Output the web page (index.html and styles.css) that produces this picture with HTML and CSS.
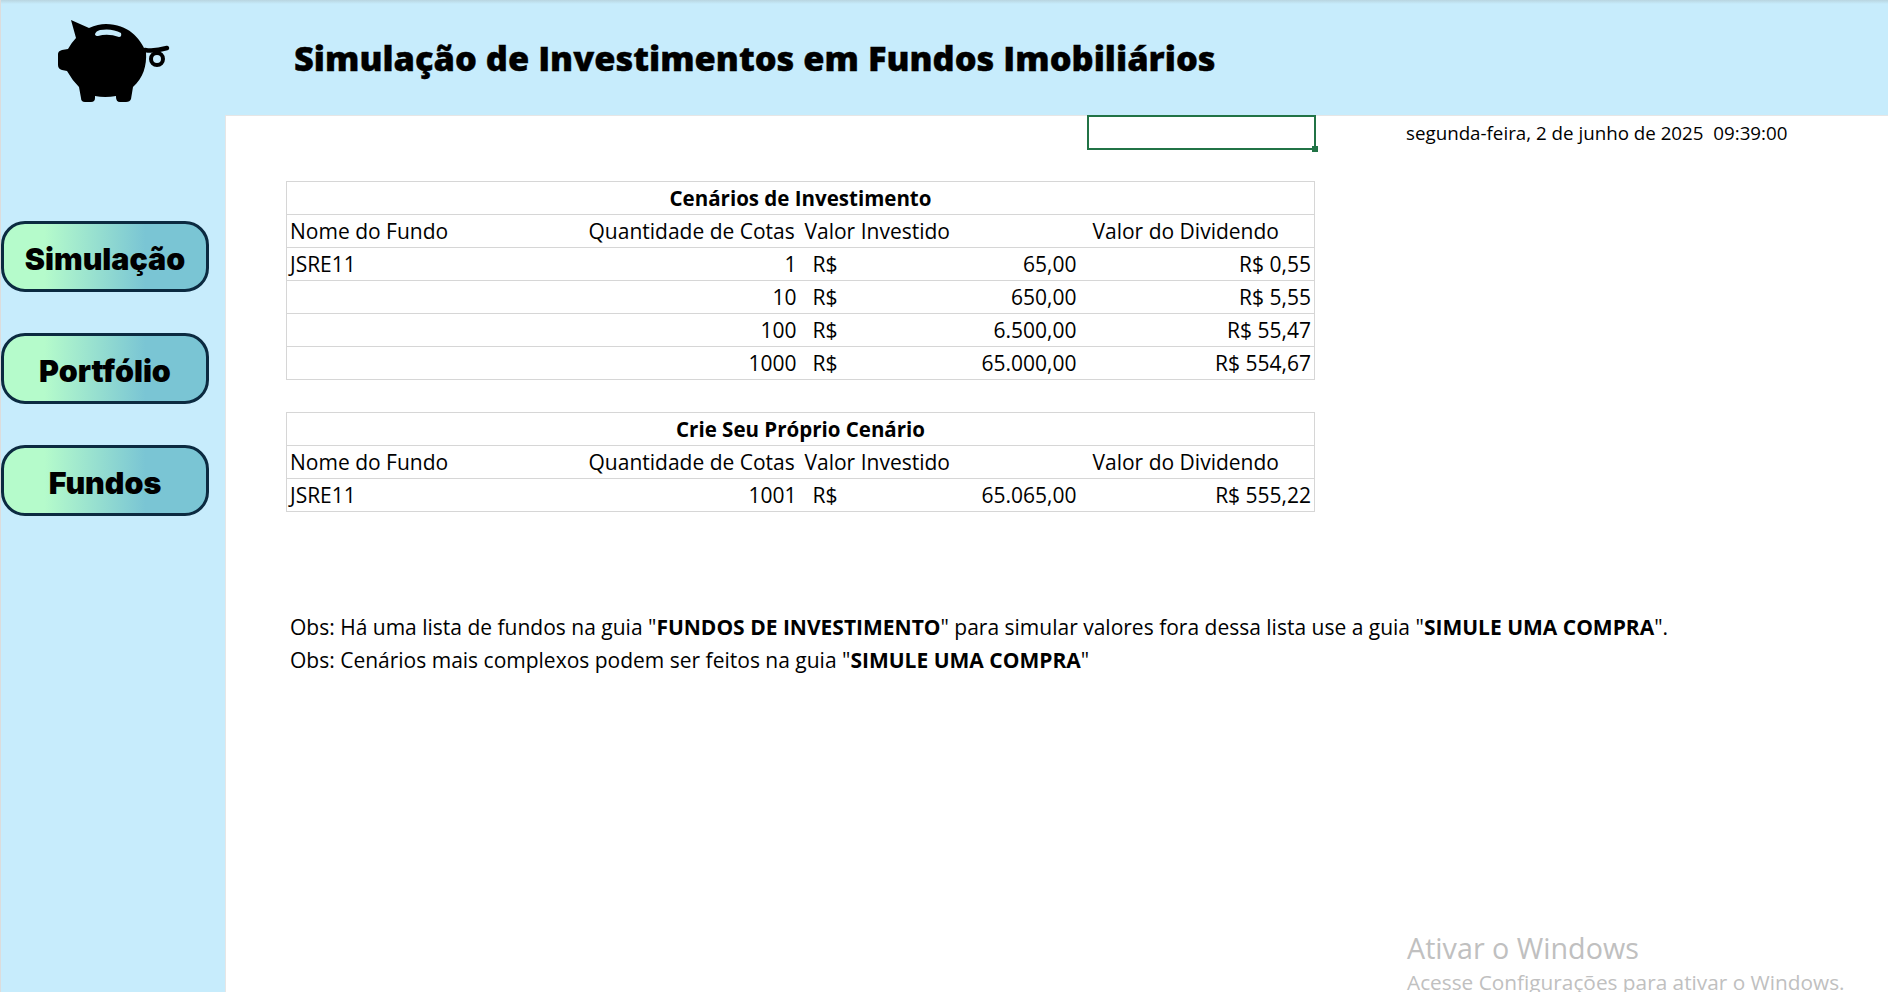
FILE: index.html
```html
<!DOCTYPE html>
<html lang="pt-BR">

<head>
    <meta charset="UTF-8">
    <title>Simulação de Investimentos em Fundos Imobiliários</title>
    <link rel="stylesheet" href="styles.css">
</head>

<body>
    <div class="app">
        <header class="topbar">
            <div class="logo">
                <svg width="225" height="115" viewBox="0 0 225 115">
                    <path d="M71 20 L89 28 Q98 24 106 24 C128 24 140 38 146 52 C147 66 143 78 133 87 L131 99 Q130 102 126 102 L120 102 Q116 102 116 97 L116 96 Q105 98 95 96 L95 98 Q95 102 91 102 L85 102 Q81 102 81 98 L79 87 Q72 80 67 71 L62 70 Q58 69 58 65 L58 54 Q58 51 62 50 L68 49 Q72 42 76 38 Z" fill="#000" />
                    <path d="M95 34 Q96 31 100 30 Q112 28 121 33 Q122 37 119 37 Q108 33 98 36 Q95 36 95 34 Z" fill="#c7ecfc" />
                    <path d="M145 50 C150 51 160 50 167 48" fill="none" stroke="#000" stroke-width="4.5" stroke-linecap="round" />
                    <ellipse cx="157" cy="59" rx="6" ry="6" fill="none" stroke="#000" stroke-width="4" />
                </svg>
            </div>
            <h1 class="title">Simulação de Investimentos em Fundos Imobiliários</h1>
        </header>

        <nav class="sidebar">
            <button type="button" class="nav-btn">Simulação</button>
            <button type="button" class="nav-btn">Portfólio</button>
            <button type="button" class="nav-btn">Fundos</button>
        </nav>

        <main class="sheet">
            <div class="date-row">
                <div class="selected-cell"></div>
                <div class="date">segunda-feira, 2 de junho de 2025&nbsp; 09:39:00</div>
            </div>

            <table class="grid first">
                <colgroup>
                    <col class="col-name"><col class="col-qty"><col class="col-sym"><col class="col-val"><col class="col-div">
                </colgroup>
                <tr><th colspan="5">Cenários de Investimento</th></tr>
                <tr>
                    <td>Nome do Fundo</td>
                    <td>Quantidade de Cotas</td>
                    <td colspan="2">Valor Investido</td>
                    <td class="head-div">Valor do Dividendo</td>
                </tr>
                <tr><td>JSRE11</td><td class="num">1</td><td class="sym">R$</td><td class="num">65,00</td><td class="num">R$ 0,55</td></tr>
                <tr><td></td><td class="num">10</td><td class="sym">R$</td><td class="num">650,00</td><td class="num">R$ 5,55</td></tr>
                <tr><td></td><td class="num">100</td><td class="sym">R$</td><td class="num">6.500,00</td><td class="num">R$ 55,47</td></tr>
                <tr><td></td><td class="num">1000</td><td class="sym">R$</td><td class="num">65.000,00</td><td class="num">R$ 554,67</td></tr>
            </table>

            <table class="grid second">
                <colgroup>
                    <col class="col-name"><col class="col-qty"><col class="col-sym"><col class="col-val"><col class="col-div">
                </colgroup>
                <tr><th colspan="5">Crie Seu Próprio Cenário</th></tr>
                <tr>
                    <td>Nome do Fundo</td>
                    <td>Quantidade de Cotas</td>
                    <td colspan="2">Valor Investido</td>
                    <td class="head-div">Valor do Dividendo</td>
                </tr>
                <tr><td>JSRE11</td><td class="num">1001</td><td class="sym">R$</td><td class="num">65.065,00</td><td class="num">R$ 555,22</td></tr>
            </table>

            <div class="notes">
                <p>Obs: Há uma lista de fundos na guia "<b>FUNDOS DE INVESTIMENTO</b>" para simular valores fora dessa lista use a guia "<b>SIMULE UMA COMPRA</b>".</p>
                <p>Obs: Cenários mais complexos podem ser feitos na guia "<b>SIMULE UMA COMPRA</b>"</p>
            </div>
        </main>
    </div>

    <div class="watermark">
        <div class="wm-title">Ativar o Windows</div>
        <div class="wm-sub">Acesse Configurações para ativar o Windows.</div>
    </div>
</body>

</html>
```

FILE: styles.css
```css
html,
body {
    margin: 0;
    height: 992px;
    overflow: hidden;
    background-color: white;
    font-family: "Open Sans", "Noto Sans", sans-serif;
    color: black;
}

.app {
    display: grid;
    grid-template-columns: 225px 1fr;
    grid-template-rows: 115px 1fr;
    height: 992px;
}

.topbar {
    grid-column: 1 / 3;
    display: flex;
    align-items: center;
    background: linear-gradient(#b9d5e0, #c7ecfc 4px);
    border-left: 1px solid #dcdcdc;
}

.logo {
    width: 224px;
    height: 115px;
}

.logo svg {
    margin-left: -1px;
}

.title {
    margin: 0 0 0 69px;
    font-size: 34.4px;
    font-weight: 800;
    -webkit-text-stroke: 0.4px black;
    white-space: nowrap;
}

.sidebar {
    display: flex;
    flex-direction: column;
    align-items: flex-start;
    gap: 41px;
    padding-top: 106px;
    background-color: #c7ecfc;
    border-left: 1px solid #dcdcdc;
}

.nav-btn {
    width: 208px;
    height: 71px;
    padding: 5px 0 0;
    border: 3px solid #0b2a40;
    border-radius: 24px;
    background: linear-gradient(90deg, #b5fbcb 20%, #7ac5d4 70%);
    font-family: Inter, "Open Sans", sans-serif;
    font-size: 30.4px;
    font-weight: 900;
    color: black;
}

.sheet {
    display: flex;
    flex-direction: column;
    font-size: 21px;
    line-height: 32px;
    box-shadow: inset 1px 1px 0 #e6e6e6;
}

.date-row {
    display: flex;
    height: 35px;
}

.selected-cell {
    position: relative;
    box-sizing: border-box;
    width: 229px;
    height: 35px;
    margin-left: 862px;
    border: 2px solid #217346;
}

.selected-cell::after {
    content: "";
    position: absolute;
    right: -4px;
    bottom: -4px;
    width: 6px;
    height: 6px;
    background-color: #217346;
}

.date {
    margin-left: 90px;
    font-size: 18.75px;
    line-height: 35px;
    white-space: nowrap;
}

.grid {
    width: 1028px;
    margin-left: 61px;
    border-collapse: collapse;
    table-layout: fixed;
}

.grid.first {
    margin-top: 31px;
}

.grid.second {
    margin-top: 32px;
}

.grid th,
.grid td {
    height: 32px;
    padding: 0 3px;
    border: 1px solid #d6d6d6;
    border-left: none;
    border-right: none;
    white-space: nowrap;
    overflow: hidden;
}

.grid tr > :first-child {
    border-left: 1px solid #d6d6d6;
}

.grid tr > :last-child {
    border-right: 1px solid #d6d6d6;
}

.grid th {
    font-size: 20.5px;
    font-weight: bold;
    text-align: center;
}

.col-name { width: 299px; }
.col-qty { width: 216px; }
.col-sym { width: 70px; }
.col-val { width: 208px; }
.col-div { width: 235px; }

.grid td.head-div {
    padding-left: 13px;
}

.num {
    text-align: right;
}

.grid td:nth-child(2).num {
    padding-right: 5px;
}

.grid td.sym {
    padding-left: 11px;
}

.notes {
    margin: 99px 0 0 65px;
    line-height: 33px;
    white-space: nowrap;
}

.notes p {
    margin: 0;
}

.watermark {
    position: absolute;
    left: 1407px;
    top: 930px;
    color: #c0c0c0;
    white-space: nowrap;
}

.wm-title {
    font-size: 28.7px;
    line-height: 36px;
}

.wm-sub {
    margin-top: 3px;
    font-size: 20.8px;
    line-height: 26px;
}
```
